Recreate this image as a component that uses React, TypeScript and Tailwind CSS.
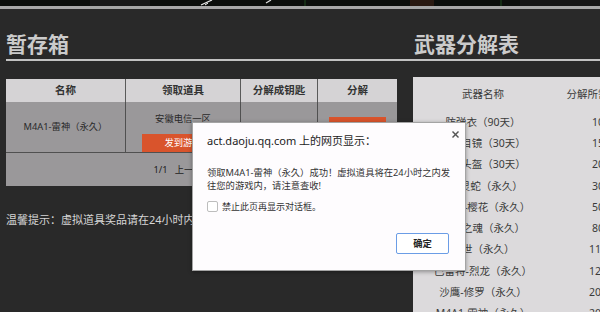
import React from "react";

const rightRows: [string, string][] = [
  ["防弹衣（90天）", "10"],
  ["夜视目镜（30天）", "15"],
  ["防护头盔（30天）", "20"],
  ["AK-灵蛇（永久）", "30"],
  ["M4A1-樱花（永久）", "50"],
  ["骑士之魂（永久）", "80"],
  ["盛世（永久）", "110"],
  ["巴雷特-烈龙（永久）", "120"],
  ["沙鹰-修罗（永久）", "200"],
  ["M4A1-雷神（永久）", "200"],
];

export default function App() {
  return (
    <div className="relative w-[600px] h-[312px] overflow-hidden bg-[#292929] font-['Noto_Sans','Noto_Sans_CJK_SC',sans-serif]">
      {/* top image strip */}
      <div className="h-[6px] bg-[#0b0e0b]">
        <svg width="600" height="6" viewBox="0 0 600 6" className="block">
          <rect x="0" y="0" width="600" height="6" fill="#0b0e0b" />
          <rect x="90" y="0" width="60" height="6" fill="#1a1a1a" />
          <rect x="520" y="0" width="80" height="6" fill="#151515" />
          <line x1="201" y1="5" x2="212" y2="0" stroke="#e8e8e8" strokeWidth="1.3" />
          <line x1="205" y1="5" x2="208" y2="3" stroke="#ffffff" strokeWidth="1" />
          <line x1="266" y1="3" x2="271" y2="0" stroke="#e0e0e0" strokeWidth="1.2" />
          <line x1="305" y1="0" x2="305" y2="6" stroke="#1f4a1f" strokeWidth="1" />
          <line x1="501" y1="0" x2="501" y2="6" stroke="#1f4a1f" strokeWidth="1" />
          <rect x="410" y="0" width="24" height="6" fill="#2a1a12" />
        </svg>
      </div>
      <div className="h-[3px] bg-[#a8a8a8]" />

      <div className="pl-[6px]">
        <div className="flex pt-[23px]">
          <div className="w-[408px] text-[21px] leading-[24px] font-bold text-[#cbcbcb]">暂存箱</div>
          <div className="text-[21px] leading-[24px] font-bold text-[#cbcbcb]">武器分解表</div>
        </div>
        <div className="mt-[3px] h-[2px] bg-[#c2c2c2]" />

        <div className="flex items-start">
          {/* left column */}
          <div className="w-[391px] mt-[18px] shrink-0">
            <div className="grid grid-cols-[119px_115px_77px_80px] h-[23px] bg-[#d5d3d5] text-[10.5px] font-bold text-[#333]">
              <div className="flex items-center justify-center">名称</div>
              <div className="flex items-center justify-center border-l border-[#5a5a5a]">领取道具</div>
              <div className="flex items-center justify-center border-l border-[#5a5a5a]">分解成钥匙</div>
              <div className="flex items-center justify-center border-l border-[#5a5a5a]">分解</div>
            </div>
            <div className="grid grid-cols-[119px_115px_77px_80px] h-[51px] bg-[#9a989a] border-b border-[#505050] text-[9.3px] text-[#2a2a2a]">
              <div className="flex items-center justify-center">M4A1-雷神（永久）</div>
              <div className="flex flex-col items-center border-l border-[#505050] pt-[10px]">
                <div className="leading-[13px]">安徽电信一区</div>
                <div className="mt-[9px] w-[82px] h-[18px] bg-[#d9542c] text-white flex items-center justify-center">发到游戏</div>
              </div>
              <div className="border-l border-[#505050]" />
              <div className="flex items-center justify-center border-l border-[#505050]">
                <div className="w-[57px] h-[21px] bg-[#d9542c] text-white flex items-center justify-center">分解</div>
              </div>
            </div>
            <div className="h-[33px] bg-[#9a989a] flex items-center justify-center gap-[7px] pr-[12px] text-[9.3px] text-[#222]">
              <span>1/1</span>
              <span>上一页</span>
              <span>下一页</span>
            </div>
            <div className="mt-[26px] text-[11px] leading-[16px] text-[#d6d6d6] whitespace-nowrap overflow-hidden">
              温馨提示：虚拟道具奖品请在24小时内发放到您的游戏账号中，请注意查收。
            </div>
          </div>

          {/* right panel */}
          <div className="ml-[16px] mt-[16px] w-[240px] h-[240px] shrink-0 bg-[#dcdadc] text-[10.5px] text-[#3a3a3a]">
            <div className="grid grid-cols-[140px_90px] h-[35px] items-center">
              <div className="text-center">武器名称</div>
              <div className="text-center whitespace-nowrap">分解所需钥匙</div>
            </div>
            {rightRows.map(([n, v], i) => (
              <div key={i} className="grid grid-cols-[140px_90px] h-[21.25px] items-center">
                <div className="text-center whitespace-nowrap">{n}</div>
                <div className="text-center">{v}</div>
              </div>
            ))}
          </div>
        </div>
      </div>

      {/* alert dialog */}
      <div className="absolute left-[192px] top-[122px] w-[274px] h-[149px] bg-[#fefcfe] border border-[#a4a4a4] shadow-[0_1px_4px_rgba(0,0,0,0.35)] text-[#333]">
        <svg width="7" height="7" viewBox="0 0 7 7" className="absolute right-[6px] top-[8px]">
          <line x1="0.5" y1="0.5" x2="6.5" y2="6.5" stroke="#555" strokeWidth="1.4" />
          <line x1="6.5" y1="0.5" x2="0.5" y2="6.5" stroke="#555" strokeWidth="1.4" />
        </svg>
        <div className="pl-[14px] pt-[10px] text-[11px] leading-[16px] text-[#222] whitespace-nowrap">
          act.daoju.qq.com 上的网页显示：
        </div>
        <div className="pl-[14px] mt-[17px] text-[9.3px] leading-[13px] text-[#333]">
          <div className="whitespace-nowrap">领取M4A1-雷神（永久）成功！虚拟道具将在24小时之内发</div>
          <div className="whitespace-nowrap">往您的游戏内，请注意查收!</div>
        </div>
        <div className="pl-[14px] mt-[9px] flex items-center gap-[4px]">
          <div className="w-[11px] h-[11px] rounded-[2px] border border-[#bdbdbd] bg-white" />
          <span className="text-[9px] leading-[11px] text-[#333]">禁止此页再显示对话框。</span>
        </div>
        <div className="flex justify-end pr-[16px] mt-[21px]">
          <div className="w-[53px] h-[21px] rounded-[2px] border border-[#6b9de6] bg-white flex items-center justify-center text-[9.3px] font-bold text-[#222]">
            确定
          </div>
        </div>
      </div>
    </div>
  );
}
